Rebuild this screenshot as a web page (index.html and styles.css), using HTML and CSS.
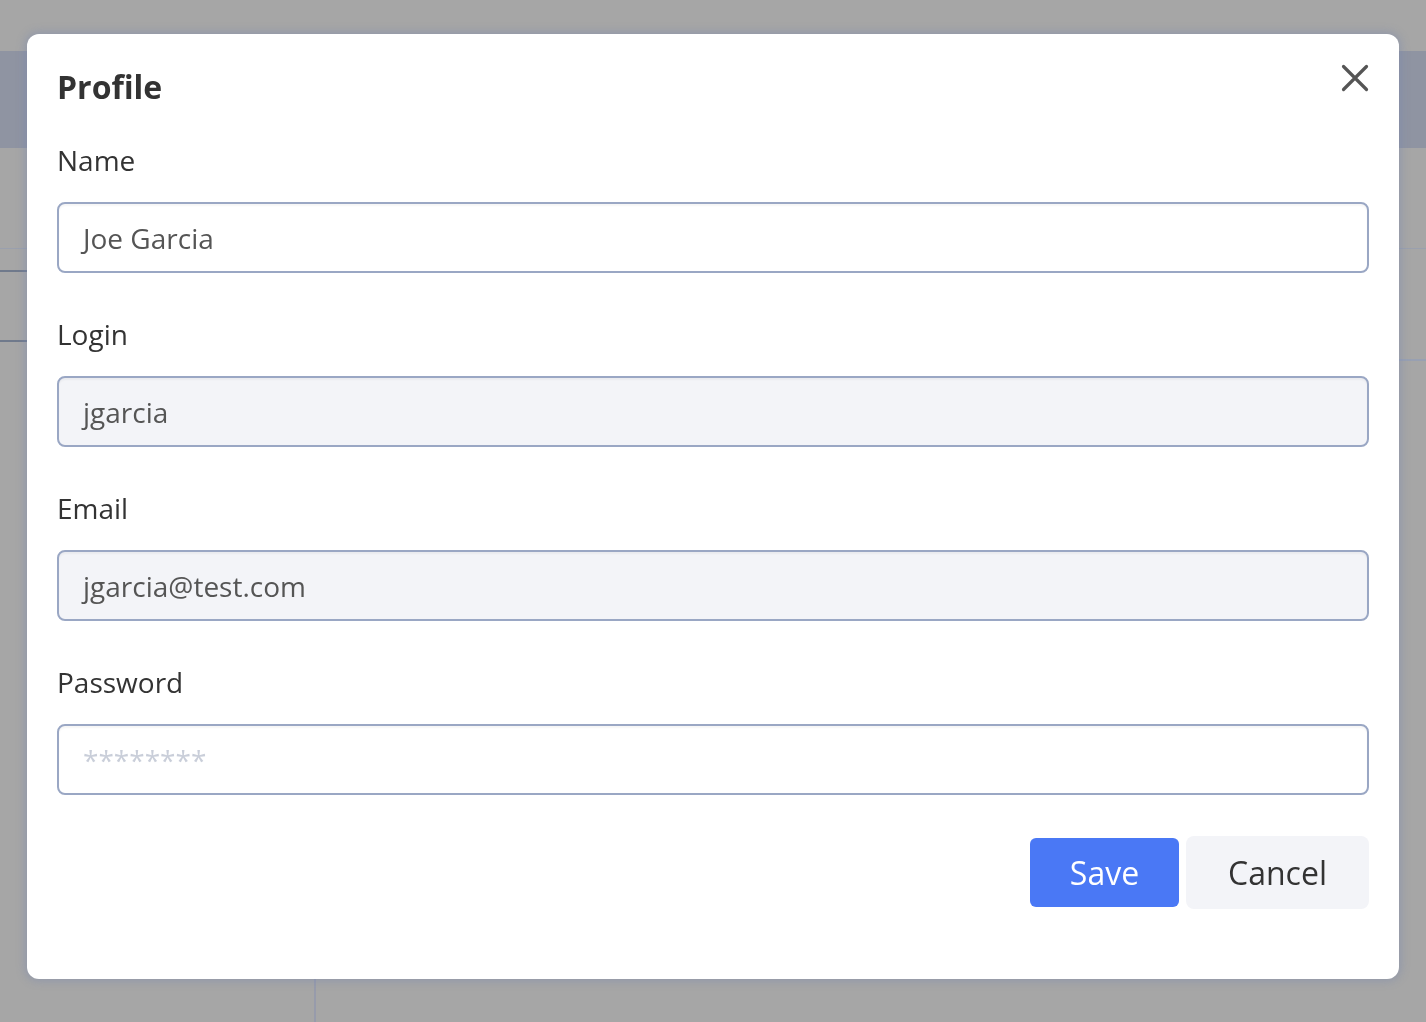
FILE: index.html
```html
<!DOCTYPE html>
<html lang="en">
<head>
<meta charset="utf-8">
<title>Profile</title>
<link rel="stylesheet" href="styles.css">
</head>
<body>
<div class="app">
  <div class="topgap"></div>
  <div class="header"></div>
  <div class="main">
    <div class="sidebar">
      <div class="sb-top"></div>
      <div class="sb-row1"></div>
      <div class="sb-row2"></div>
      <div class="sb-rest"></div>
    </div>
    <div class="content">
      <div class="ct-top"></div>
      <div class="ct-row1"></div>
      <div class="ct-rest"></div>
    </div>
  </div>
</div>

<div class="overlay">
  <div class="modal">
    <div class="modal-head">
      <h1 class="title">Profile</h1>
      <button class="close" aria-label="Close">
        <svg width="28" height="28" viewBox="0 0 28 28"><path d="M2.5 2.5 L25.5 25.5 M25.5 2.5 L2.5 25.5" stroke="#555" stroke-width="3.2" stroke-linecap="round" fill="none"/></svg>
      </button>
    </div>
    <div class="fields">
      <div class="field">
        <label class="label">Name</label>
        <div class="input">Joe Garcia</div>
      </div>
      <div class="field">
        <label class="label">Login</label>
        <div class="input disabled">jgarcia</div>
      </div>
      <div class="field">
        <label class="label">Email</label>
        <div class="input disabled">jgarcia@test.com</div>
      </div>
      <div class="field">
        <label class="label">Password</label>
        <div class="input placeholder">********</div>
      </div>
    </div>
    <div class="actions">
      <button class="btn save">Save</button>
      <button class="btn cancel">Cancel</button>
    </div>
  </div>
</div>
</body>
</html>
```

FILE: styles.css
```css
* { box-sizing: border-box; }
html, body { margin: 0; padding: 0; }
body {
  background: #a6a6a6;
  font-family: "Open Sans", "Noto Sans", sans-serif;
  width: 1426px;
  height: 1022px;
  overflow: hidden;
}
.app { display: flex; flex-direction: column; height: 1022px; }
.topgap { height: 51px; }
.header { height: 97px; background: #8f94a2; }
.main { flex: 1; display: flex; }
.sidebar { width: 316px; border-right: 2px solid #979bab; display: flex; flex-direction: column; }
.sb-top { height: 101px; border-bottom: 1px solid #9aa0ae; }
.sb-row1 { height: 23px; border-bottom: 2px solid #707a8c; }
.sb-row2 { height: 70px; border-bottom: 2px solid #707a8c; }
.sb-rest { flex: 1; }
.content { flex: 1; display: flex; flex-direction: column; }
.ct-top { height: 101px; border-bottom: 1px solid #9aa0ae; }
.ct-row1 { height: 112px; border-bottom: 2px solid #98a0b2; }
.ct-rest { flex: 1; }

.overlay {
  position: fixed;
  inset: 0;
  display: flex;
  justify-content: center;
  align-items: flex-start;
  padding-top: 34px;
}
.modal {
  width: 1372px;
  background: #fff;
  border-radius: 12px;
  box-shadow: 0 0 8px 2px rgba(120, 135, 175, 0.45);
  padding: 30px 30px 70px 30px;
  display: flex;
  flex-direction: column;
}
.modal-head { display: flex; justify-content: space-between; align-items: flex-start; height: 46px; }
.title { margin: 0; font-size: 32px; line-height: 46px; font-weight: 700; color: #333; }
.close { border: 0; background: none; padding: 0; width: 28px; height: 28px; display: block; cursor: pointer; }
.close svg { display: block; }

.fields { margin-top: 30px; display: flex; flex-direction: column; gap: 41px; }
.field { display: flex; flex-direction: column; gap: 22px; }
.label { font-size: 28px; line-height: 40px; color: #333; }
.input {
  height: 71px;
  border: 2px solid #9aa7c4;
  border-radius: 8px;
  padding: 0 24px;
  display: flex;
  align-items: center;
  font-size: 28px;
  color: #555;
  background: #fff;
  box-shadow: inset 0 2px 2px rgba(0, 0, 0, 0.04);
}
.input.disabled { background: #f3f4f8; }
.input.placeholder { color: #c9ced9; }

.actions { margin-top: 41px; display: flex; justify-content: flex-end; align-items: center; gap: 7px; }
.btn {
  font-family: "Open Sans", "Noto Sans", sans-serif;
  font-size: 32px;
  border: 0;
  padding: 0;
  text-align: center;
}
.save { width: 149px; height: 69px; background: #4a78f5; color: #fff; border-radius: 6px; }
.cancel { width: 183px; height: 73px; background: #f3f4f8; color: #333; border-radius: 8px; }
```
